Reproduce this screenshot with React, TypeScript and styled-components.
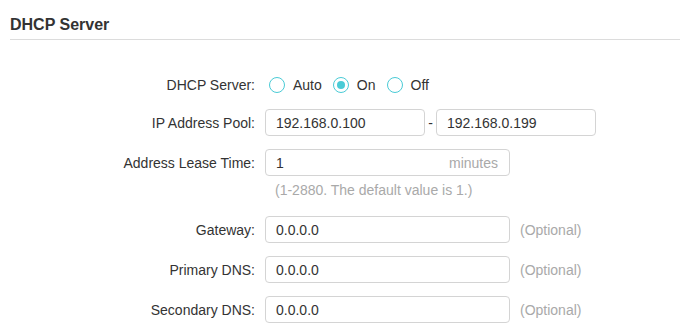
import React from 'react';
import styled, { createGlobalStyle } from 'styled-components';

const GlobalStyle = createGlobalStyle`
  body {
    margin: 0;
    background: #fff;
    font-family: "Liberation Sans", Arial, sans-serif;
    color: #333;
  }
`;

const Page = styled.div`
  width: 687px;
  padding: 0 7px 0 10px;
  box-sizing: border-box;
`;

const Header = styled.div`
  padding: 15px 0 4px;
  border-bottom: 1px solid #dcdcdc;
`;

const Title = styled.h2`
  margin: 0;
  font-size: 16px;
  line-height: 20px;
  font-weight: bold;
  color: #333;
`;

const Form = styled.div`
  padding-top: 31px;
`;

const Row = styled.div<{ $gap?: number }>`
  display: grid;
  grid-template-columns: 245px auto;
  column-gap: 10px;
  align-items: center;
  min-height: 27px;
  margin-bottom: ${(p) => p.$gap ?? 13}px;
`;

const Label = styled.label`
  text-align: right;
  font-size: 14px;
  color: #333;
`;

const Field = styled.div`
  display: flex;
  align-items: center;
`;

const RadioGroup = styled.div`
  display: flex;
  align-items: center;
  gap: 11px;
  padding-left: 4px;
`;

const RadioItem = styled.label`
  display: flex;
  align-items: center;
  gap: 8px;
  font-size: 14px;
  color: #333;
`;

const RadioCircle = styled.span<{ $checked?: boolean }>`
  width: 16px;
  height: 16px;
  box-sizing: border-box;
  border: 1px solid #4acbd6;
  border-radius: 50%;
  display: flex;
  align-items: center;
  justify-content: center;

  &::after {
    content: '';
    width: 8px;
    height: 8px;
    border-radius: 50%;
    background: #4acbd6;
    display: ${(p) => (p.$checked ? 'block' : 'none')};
  }
`;

const TextBox = styled.input<{ $w?: number }>`
  width: ${(p) => p.$w ?? 245}px;
  height: 27px;
  box-sizing: border-box;
  border: 1px solid #d4d4d4;
  border-radius: 4px;
  padding: 0 10px;
  font-family: inherit;
  font-size: 14px;
  color: #333;
  outline: none;
`;

const SuffixBox = styled.div`
  width: 245px;
  height: 27px;
  box-sizing: border-box;
  border: 1px solid #d4d4d4;
  border-radius: 4px;
  padding: 0 11px 0 10px;
  display: flex;
  align-items: center;
  font-size: 14px;
`;

const BareInput = styled.input`
  flex: 1;
  min-width: 0;
  border: none;
  padding: 0;
  font-family: inherit;
  font-size: 14px;
  color: #333;
  outline: none;
`;

const Muted = styled.span`
  font-size: 14px;
  color: #a9a9a9;
`;

const Dash = styled.span`
  width: 11px;
  text-align: center;
  font-size: 14px;
  color: #333;
`;

const Note = styled.div`
  margin: 4px 0 16px 255px;
  padding-left: 10px;
  font-size: 14px;
  line-height: 20px;
  color: #a9a9a9;
`;

const Optional = styled(Muted)`
  margin-left: 10px;
`;

const options = [
  { label: 'Auto', checked: false },
  { label: 'On', checked: true },
  { label: 'Off', checked: false },
];

const optionalFields = [
  { label: 'Gateway:', value: '0.0.0.0' },
  { label: 'Primary DNS:', value: '0.0.0.0' },
  { label: 'Secondary DNS:', value: '0.0.0.0' },
];

export default function App() {
  return (
    <>
      <GlobalStyle />
      <Page>
        <Header>
          <Title>DHCP Server</Title>
        </Header>
        <Form>
          <Row $gap={11}>
            <Label>DHCP Server:</Label>
            <RadioGroup>
              {options.map((o) => (
                <RadioItem key={o.label}>
                  <RadioCircle $checked={o.checked} />
                  {o.label}
                </RadioItem>
              ))}
            </RadioGroup>
          </Row>
          <Row>
            <Label>IP Address Pool:</Label>
            <Field>
              <TextBox $w={160} defaultValue="192.168.0.100" />
              <Dash>-</Dash>
              <TextBox $w={160} defaultValue="192.168.0.199" />
            </Field>
          </Row>
          <Row $gap={0}>
            <Label>Address Lease Time:</Label>
            <SuffixBox>
              <BareInput defaultValue="1" />
              <Muted>minutes</Muted>
            </SuffixBox>
          </Row>
          <Note>(1-2880. The default value is 1.)</Note>
          {optionalFields.map((f) => (
            <Row key={f.label}>
              <Label>{f.label}</Label>
              <Field>
                <TextBox defaultValue={f.value} />
                <Optional>(Optional)</Optional>
              </Field>
            </Row>
          ))}
        </Form>
      </Page>
    </>
  );
}
